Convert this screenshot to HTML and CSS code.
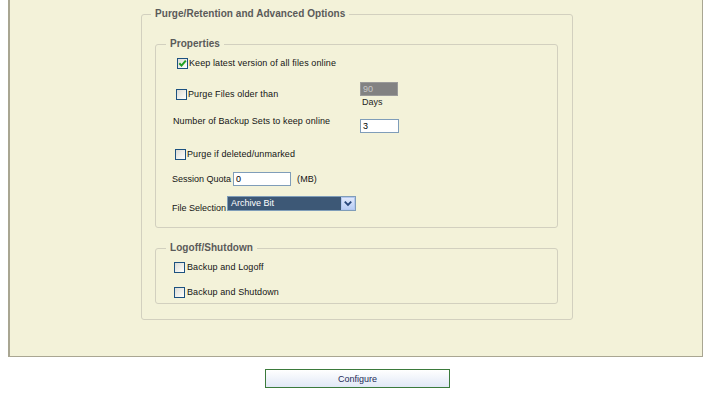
FILE: index.html
```html
<!DOCTYPE html>
<html>
<head>
<meta charset="utf-8">
<title>Purge/Retention and Advanced Options</title>
<link rel="stylesheet" href="styles.css">
</head>
<body>
<div class="panel">
  <fieldset class="outer">
    <legend>Purge/Retention and Advanced Options</legend>

    <fieldset class="group props">
      <legend>Properties</legend>

      <div class="row r1">
        <span class="cb checked"><svg viewBox="0 0 9 9" width="9" height="9"><path d="M1.3 4.3 L3.5 6.6 L7.8 1.6" fill="none" stroke="#21a121" stroke-width="2"/></svg></span>
        <span class="lbl">Keep latest version of all files online</span>
      </div>

      <div class="row r2">
        <div class="left">
          <span class="cb"></span>
          <span class="lbl">Purge Files older than</span>
        </div>
        <div class="right">
          <span class="txt disabled">90</span>
          <span class="unit">Days</span>
        </div>
      </div>

      <div class="row r3">
        <span class="lbl left3">Number of Backup Sets to keep online</span>
        <span class="txt num">3</span>
      </div>

      <div class="row r4">
        <span class="cb"></span>
        <span class="lbl">Purge if deleted/unmarked</span>
      </div>

      <div class="row r5">
        <span class="lbl tight">Session Quota</span>
        <span class="txt quota">0</span>
        <span class="lbl mb">(MB)</span>
      </div>

      <div class="row r6">
        <span class="lbl tight fs">File Selection</span>
        <div class="select">
          <span class="sel-val">Archive Bit</span>
          <span class="sel-btn"><svg viewBox="0 0 13 13" width="13" height="13"><path d="M3 4.5 L6.5 8 L10 4.5" fill="none" stroke="#26457a" stroke-width="2"/></svg></span>
        </div>
      </div>
    </fieldset>

    <fieldset class="group logoff">
      <legend>Logoff/Shutdown</legend>
      <div class="row ra">
        <span class="cb"></span>
        <span class="lbl">Backup and Logoff</span>
      </div>
      <div class="row rb">
        <span class="cb"></span>
        <span class="lbl">Backup and Shutdown</span>
      </div>
    </fieldset>
  </fieldset>
</div>
<div class="actions">
  <button class="btn" type="button">Configure</button>
</div>
</body>
</html>
```

FILE: styles.css
```css
html, body {
  margin: 0;
  padding: 0;
  background: #ffffff;
}

body {
  font-family: "Liberation Sans", Arial, sans-serif;
  font-size: 9px;
  color: #1e1e1e;
}

.panel {
  box-sizing: border-box;
  width: 695px;
  margin-left: 8px;
  background: #f3f2d9;
  border-left: 2px solid #a9a692;
  border-right: 1px solid #a9a692;
  border-bottom: 1px solid #a9a692;
  padding: 8px 0 36px 0;
}

fieldset {
  margin: 0;
  min-width: 0;
  border: 1px solid #d2d0bf;
  border-radius: 3px;
}

legend {
  font-weight: bold;
  font-size: 10px;
  line-height: 12px;
  color: #5a5a5a;
  padding: 0 4px;
  letter-spacing: 0.05px;
}

.outer {
  box-sizing: border-box;
  width: 432px;
  margin: 0 0 0 131px;
  padding: 18px 14px 15px 13px;
}

.outer > legend {
  margin-left: -4px;
}

.group {
  padding: 0;
}

.group > legend {
  margin-left: 10px;
}

.props {
  padding-bottom: 14px;
}

.logoff {
  margin-top: 14px;
  padding-bottom: 4px;
}

.row {
  display: flex;
  align-items: center;
  white-space: nowrap;
}

.lbl {
  line-height: 11px;
  letter-spacing: 0.1px;
  color: #141414;
}

.lbl.tight {
  letter-spacing: 0;
}

.cb {
  box-sizing: border-box;
  width: 11px;
  height: 11px;
  border: 1px solid #1c5180;
  background: linear-gradient(135deg, #dcdcd6 0%, #f4f4f0 70%, #ffffff 100%);
  display: inline-flex;
  align-items: center;
  justify-content: center;
  margin-right: 1px;
  flex: none;
}

.cb svg { display: block; }

.r1 {
  height: 14px;
  margin-top: 6px;
  padding-left: 21px;
}

.r2 {
  align-items: flex-start;
  margin-top: 12px;
  height: 25px;
}

.r2 .left {
  display: flex;
  align-items: center;
  width: 184px;
  padding-left: 20px;
  margin-top: 7px;
}

.r2 .right {
  display: flex;
  flex-direction: column;
}

.txt {
  box-sizing: border-box;
  display: block;
  height: 14px;
  line-height: 12px;
  border: 1px solid #7f9db9;
  background: #ffffff;
  padding: 0 2px;
  color: #000;
}

.txt.disabled {
  width: 38px;
  background: #828282;
  border-color: #9a9a9a;
  color: #c8c8c8;
}

.unit {
  margin-top: 2px;
  padding-left: 2px;
  line-height: 9px;
}

.r3 {
  align-items: flex-start;
  margin-top: 8px;
  height: 18px;
}

.left3 {
  width: 187px;
  padding-left: 17px;
  line-height: 12px;
}

.txt.num {
  width: 39px;
  margin-top: 4px;
}

.r4 {
  height: 14px;
  margin-top: 14px;
  padding-left: 19px;
}

.r5 {
  height: 14px;
  margin-top: 11px;
  padding-left: 16px;
}

.txt.quota {
  width: 58px;
  margin-left: 2px;
}

.mb {
  margin-left: 6px;
}

.r6 {
  align-items: flex-start;
  margin-top: 10px;
  height: 17px;
  padding-left: 16px;
}

.fs {
  padding-top: 7px;
  width: 55px;
  flex: none;
}

.select {
  box-sizing: border-box;
  display: flex;
  width: 129px;
  height: 15px;
  border: 1px solid #7f9db9;
  background: #3d5876;
}

.sel-val {
  flex: 1;
  color: #ffffff;
  line-height: 13px;
  padding-left: 3px;
}

.sel-btn {
  box-sizing: border-box;
  width: 14px;
  height: 13px;
  background: linear-gradient(#dfe8fb, #b9cdf5);
  border: 1px solid #b3c7ef;
  display: flex;
  align-items: center;
  justify-content: center;
}

.sel-btn svg { display: block; }

.ra {
  height: 14px;
  margin-top: 6px;
  padding-left: 18px;
}

.rb {
  height: 14px;
  margin-top: 11px;
  padding-left: 18px;
}

.ra .cb, .rb .cb { margin-right: 2px; }

.actions {
  width: 710px;
  padding-top: 12px;
  padding-left: 5px;
  box-sizing: border-box;
  display: flex;
  justify-content: center;
}

.btn {
  box-sizing: border-box;
  width: 185px;
  height: 19px;
  border: 1px solid #3b7a3b;
  border-radius: 0;
  background: linear-gradient(#ffffff, #e1e8f6);
  font-family: "Liberation Sans", Arial, sans-serif;
  font-size: 9px;
  color: #1c2a57;
  padding: 0;
  cursor: pointer;
}
```
